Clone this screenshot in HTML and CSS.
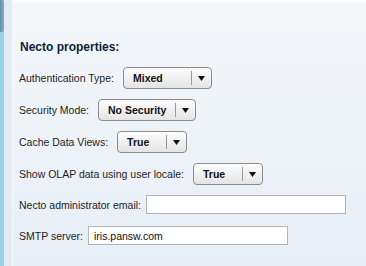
FILE: index.html
```html
<!DOCTYPE html>
<html lang="en">
<head>
  <meta charset="UTF-8" />
  <title>Necto properties</title>
  <link rel="stylesheet" href="styles.css">
</head>
<body>

  <div class="scroll">
    <div class="thumb"></div>
  </div>
  <div class="gutter"></div>

  <section class="panel">
    <h2>Necto properties:</h2>

    <div class="row">
      <label>Authentication Type:</label>
      <div class="combo w-mixed">
        <span class="value">Mixed</span>
        <span class="drop"><svg width="7" height="5" viewBox="0 0 7 5"><path d="M0 0h7L3.5 5z" /></svg></span>
      </div>
    </div>

    <div class="row">
      <label>Security Mode:</label>
      <div class="combo w-security">
        <span class="value">No Security</span>
        <span class="drop"><svg width="7" height="5" viewBox="0 0 7 5"><path d="M0 0h7L3.5 5z" /></svg></span>
      </div>
    </div>

    <div class="row">
      <label>Cache Data Views:</label>
      <div class="combo w-bool">
        <span class="value">True</span>
        <span class="drop"><svg width="7" height="5" viewBox="0 0 7 5"><path d="M0 0h7L3.5 5z" /></svg></span>
      </div>
    </div>

    <div class="row">
      <label>Show OLAP data using user locale:</label>
      <div class="combo w-bool">
        <span class="value">True</span>
        <span class="drop"><svg width="7" height="5" viewBox="0 0 7 5"><path d="M0 0h7L3.5 5z" /></svg></span>
      </div>
    </div>

    <div class="row text-row">
      <label>Necto administrator email:</label>
      <input class="field" type="text" value="" />
    </div>

    <div class="row text-row">
      <label>SMTP server:</label>
      <input class="field" type="text" value="iris.pansw.com" />
    </div>
  </section>

</body>
</html>
```

FILE: styles.css
```css
* {
  margin: 0;
  padding: 0;
  box-sizing: border-box;
}

html, body {
  height: 100%;
}

body {
  display: flex;
  font-family: 'Liberation Sans', Arial, sans-serif;
  color: #1e1e1e;
  overflow: hidden;
}

.scroll {
  width: 4px;
  background: #98d0ea;
}

.thumb {
  height: 32px;
  background: linear-gradient(to right, #5f8ea6, #86aec2);
  border-radius: 0 2px 2px 0;
}

.gutter {
  width: 9px;
  background: #e3ebf3;
  border-right: 1px solid #f6f9fc;
}

.panel {
  flex: 1;
  padding: 37px 7px 0 6px;
  background: linear-gradient(to bottom, #f4f7fa, #e7eef6);
  border-top: 3px solid #f9fbfd;
}

.panel h2 {
  font-size: 12px;
  font-weight: bold;
  color: #0c1f3a;
  line-height: 14px;
  margin: 0 0 13px 1px;
}

.row {
  display: flex;
  align-items: center;
  gap: 9px;
  height: 22px;
  margin-bottom: 10px;
  font-size: 10.5px;
}

.text-row {
  gap: 5px;
  height: 19px;
  margin-bottom: 12px;
}

.combo {
  display: flex;
  align-items: center;
  height: 22px;
  border: 1px solid #8c8c8c;
  border-radius: 4px;
  background: linear-gradient(to bottom, #fdfdfd, #e4e4e4);
}

.combo .value {
  flex: 1;
  padding-left: 9px;
  font-weight: bold;
  font-size: 10.5px;
  color: #111;
  border-right: 1px solid #9a9a9a;
  line-height: 14px;
}

.combo .drop {
  display: flex;
  justify-content: center;
  width: 19px;
  fill: #111;
}

.w-mixed { width: 89px; }
.w-security { width: 98px; }
.w-bool { width: 70px; }

.field {
  width: 200px;
  height: 19px;
  border: 1px solid #b4b4b4;
  background: #fff;
  padding: 0 5px;
  font-family: 'Liberation Sans', Arial, sans-serif;
  font-size: 10.5px;
  color: #111;
  outline: none;
}
```
